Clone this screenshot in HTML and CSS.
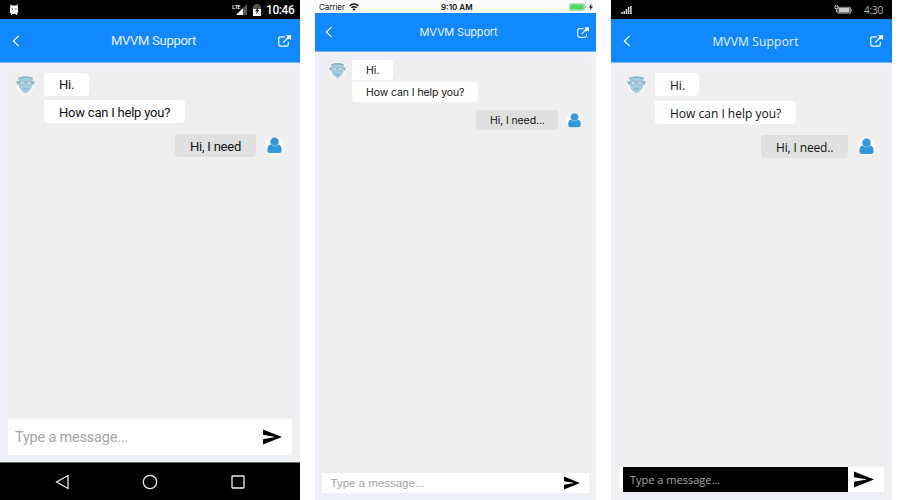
FILE: index.html
```html
<!DOCTYPE html>
<html lang="en">
<head>
<meta charset="utf-8">
<title>MVVM Support</title>
<link rel="stylesheet" href="styles.css">
</head>
<body>
<svg class="defs" aria-hidden="true">
  <symbol id="back" viewBox="0 0 8 12"><path d="M6.7.8 1.3 6l5.4 5.2" fill="none" stroke="#fff" stroke-width="1.100"/></symbol>
  <symbol id="share" viewBox="0 0 13 12"><path d="M7 1.8H2.5Q.8 1.8.8 3.5v6Q.8 11.2 2.5 11.2h6.2q1.6 0 1.600-1.700V7M5.200 7.600l5-5" fill="none" stroke="#fff" stroke-width="1.200"/><path d="M8 .2h5v5l-1.700-1.700L10 4.800 8.300 3.100l1.300-1.300z" fill="#fff"/></symbol>
  <symbol id="bot" viewBox="0 0 20 20"><circle cx="10" cy="10" r="9.500" fill="#fbfbfb"/><path d="M.5 6.500H3V10H1zM17 6.500h2.500L19 10h-2z" fill="#7fa6c0"/><path d="M2.500 3q7.500-3.500 15 0l-.3 8q-.7 5-7.200 8.500Q3.500 16 2.800 11z" fill="#a3cddb"/><path d="M2.500 3q7.500-3.500 15 0l-.2 1.500q-7.300-2.500-14.600 0z" fill="#8bb5c4"/><path d="M2.500 7.500h15" stroke="#82a9bf" stroke-width=".8"/><circle cx="6.500" cy="8.300" r="2.100" fill="#d8e6ef" stroke="#7b9fb8" stroke-width=".6"/><circle cx="13.500" cy="8.300" r="2.100" fill="#d8e6ef" stroke="#7b9fb8" stroke-width=".6"/><path d="M6.100 8.300h.9M13.100 8.300h.9" stroke="#6e8ba5"/><path d="M7.500 14.300q2.500 1.600 5 0" fill="none" stroke="#6f9bb0" stroke-width=".8"/></symbol>
  <symbol id="user" viewBox="0 0 20 20"><circle cx="10" cy="10" r="9.800" fill="#fbfbfb"/><path d="M6 9Q10 12.500 14 9q3.500.7 3.500 5.800 0 3-2.500 3H5q-2.500 0-2.500-3Q2.500 9.700 6 9z" fill="#3498db"/><circle cx="10" cy="6" r="4.500" fill="#3498db" stroke="#8fc4ea" stroke-width=".5"/></symbol>
  <symbol id="send" viewBox="0 0 20 16"><path d="M0 0 20 8 0 16V10.300L13 8 0 5.700z"/></symbol>
</svg>
<main class="screens">
  <section class="phone android">
    <div class="status">
      <svg class="critter" viewBox="0 0 10 11"><path d="M.8.5 3 2M9.200.5 7 2" stroke="#fff"/><path d="M1 3.500Q1 1.500 3 1.500h4q2 0 2 2V8q0 2-2 2H3Q1 10 1 8z" fill="#fff"/><path d="M2.500 10v1M7.500 10v1" stroke="#fff"/><path d="M2.500 5h1.500M6 5h1.500" stroke="#222" stroke-width=".8"/></svg>
      <span class="lte">LTE</span>
      <svg class="cell" viewBox="0 0 12 12"><path d="M12 0v12H0z" fill="#555"/><path d="M7.500 4.500V12H0z" fill="#fff"/></svg>
      <svg class="battery" viewBox="0 0 8 12"><path d="M0 1.500h2V0h4v1.500h2V5H0z" fill="#555"/><path d="M0 5h8v7H0z" fill="#fff"/><path d="M5.500 3 2 7.300h2L2.800 10.500 6.300 6.300H4.500z" fill="#000"/></svg>
      <time>10:46</time>
    </div>
    <header><svg class="back"><use href="#back"/></svg><h1>MVVM Support</h1><svg class="share"><use href="#share"/></svg></header>
    <div class="body">
      <div class="chat">
        <div class="row bot"><svg class="avatar"><use href="#bot"/></svg><div class="stack"><p class="bubble hi">Hi.</p><p class="bubble help">How can I help you?</p></div></div>
        <div class="row me"><p class="bubble need">Hi, I need</p><svg class="avatar"><use href="#user"/></svg></div>
      </div>
      <div class="composer"><span class="field">Type a message...</span><svg class="send"><use href="#send"/></svg></div>
    </div>
    <nav>
      <svg viewBox="0 0 16 16"><path d="M14 1.500v13L2.500 8z"/></svg>
      <svg viewBox="0 0 16 16"><circle cx="8" cy="8" r="6.700"/></svg>
      <svg viewBox="0 0 16 16"><rect x="2" y="2" width="12" height="12" rx=".5"/></svg>
    </nav>
  </section>

  <section class="phone ios">
    <div class="status">
      <span class="carrier">Carrier</span>
      <svg class="wifi" viewBox="0 0 10 8"><path d="M.6 2.900q4.400-3.800 8.800 0M2.400 4.800q2.600-2.200 5.200 0" fill="none" stroke="#111" stroke-width="1.400"/><path d="m3.500 6 1.500 1.700L6.500 6Q5 5 3.500 6z"/></svg>
      <time>9:10 AM</time>
      <svg class="battery" viewBox="0 0 24 8"><rect x=".4" y=".5" width="15.200" height="7" rx="1.200" fill="#fff" stroke="#9cc9a4" stroke-width=".7"/><rect x="1.200" y="1.200" width="13.600" height="5.600" rx=".6" fill="#4cd964"/><path d="M16.700 3v2" stroke="#999"/><path d="M22.500.5 20 4.500h1.700L20.900 7.500 24 3.600h-2z" fill="#111"/></svg>
    </div>
    <header><svg class="back"><use href="#back"/></svg><h1>MVVM Support</h1><svg class="share"><use href="#share"/></svg></header>
    <div class="body">
      <div class="chat">
        <div class="row bot"><svg class="avatar"><use href="#bot"/></svg><div class="stack"><p class="bubble hi">Hi.</p><p class="bubble help">How can I help you?</p></div></div>
        <div class="row me"><p class="bubble need">Hi, I need...</p><svg class="avatar"><use href="#user"/></svg></div>
      </div>
      <div class="composer"><span class="field">Type a message...</span><svg class="send"><use href="#send"/></svg></div>
    </div>
  </section>

  <section class="phone windows">
    <div class="status">
      <svg class="bars" viewBox="0 0 11 9"><path d="M1 9V7M3.200 9V6M5.400 9V4M7.600 9V2M9.900 9V1" stroke="#ddd" stroke-width="1.500"/></svg>
      <svg class="battery" viewBox="0 0 18 9"><path d="M4 2.300h12.500v5.900H4zM17.300 3.800v2.800" fill="none" stroke="#aaa" stroke-width=".9"/><path d="M5 3h10.500v4.500H5z" fill="#ccc"/><path d="M1 1h3v2.500H1zM2.500 3.500V7H4M1.500 0v1M3.500 0v1" fill="none" stroke="#bbb" stroke-width=".9"/></svg>
      <time>4:30</time>
    </div>
    <header><svg class="back"><use href="#back"/></svg><h1>MVVM Support</h1><svg class="share"><use href="#share"/></svg></header>
    <div class="body">
      <div class="chat">
        <div class="row bot"><svg class="avatar"><use href="#bot"/></svg><div class="stack"><p class="bubble hi">Hi.</p><p class="bubble help">How can I help you?</p></div></div>
        <div class="row me"><p class="bubble need">Hi, I need..</p><svg class="avatar"><use href="#user"/></svg></div>
      </div>
      <div class="composer"><span class="field">Type a message...</span><svg class="send"><use href="#send"/></svg></div>
    </div>
  </section>
</main>
</body>
</html>
```

FILE: styles.css
```css
* { box-sizing: border-box; }
body { margin: 0; background: #fff; overflow: hidden; }
.defs { display: none; }
svg { display: block; flex: none; }
h1, p { margin: 0; font-weight: 400; white-space: nowrap; }

.screens { display: grid; grid-template-columns: 300px 281px 281px; column-gap: 15px; height: 500px; }
.phone { display: flex; flex-direction: column; height: 500px; background: #eff0f5; color: #111; }
.status { display: flex; align-items: center; height: 19px; flex: none; background: #000; color: #fff; white-space: nowrap; }
header { display: flex; align-items: center; justify-content: space-between; height: 44px; flex: none; background: #1188ff; border-bottom: 1px solid #72b7fa; color: #fff; }
h1 { color: #e6f2ff; }
.back { width: 8px; height: 12px; }
.share { width: 13px; height: 12px; }
.body { flex: 1; display: flex; flex-direction: column; padding: 7px 8px; }
.chat { flex: 1; background: #efefef; }
.row { display: flex; }
.me { justify-content: flex-end; align-items: center; }
.avatar { width: 19px; height: 19px; }
.stack { display: flex; flex-direction: column; }
.bubble { display: flex; align-items: center; height: 23px; padding-left: 15px; background: #fff; border-radius: 4px; }
.hi { border-radius: 0 4px 4px 0; }
.help { border-radius: 0 4px 4px 4px; }
.need { background: #e0e0e0; border-radius: 4px 0 4px 4px; }
.composer { display: flex; align-items: center; justify-content: space-between; flex: none; background: #fff; }
.field { white-space: nowrap; color: #a6a6a6; }

.android { font: 13px/16px Roboto, sans-serif; }
.android .status { padding: 0 6px 0 9px; }
.critter { width: 10px; height: 11px; margin-right: auto; }
.lte { font: 600 6px/6px "Open Sans", sans-serif; letter-spacing: -.7px; align-self: flex-start; margin: 4px -4px 0 0; }
.cell { width: 11px; height: 11px; margin-right: 6px; }
.android .battery { width: 8px; height: 12px; margin-right: 5px; }
.android time { font-size: 12px; font-weight: 500; letter-spacing: -.4px; width: 28px; }
.android header { padding: 0 9px 0 12px; }
.android h1 { font-size: 13px; line-height: 16px; letter-spacing: -.27px; margin-left: 9px; }
.android .chat { padding: 3px 8px 0; }
.android .bot .avatar { margin: 2px 9px 0 0; }
.android .stack { gap: 4px; }
.android .bubble { letter-spacing: -.22px; }
.android .hi { width: 45px; }
.android .help { width: 141px; padding-top: 2px; }
.android .me { margin-top: 11px; }
.android .need { width: 81px; margin-right: 9px; padding-top: 2px; }
.android .composer { height: 36px; padding: 0 10px 0 7px; }
.android .field { font-size: 14.500px; letter-spacing: -.2px; padding-top: 2px; }
.android .send { width: 19px; height: 16px; }
nav { height: 38px; flex: none; display: flex; justify-content: space-between; align-items: center; padding: 0 54px; border-top: 1px solid #687069; background: #000; }
nav svg { width: 16px; height: 16px; fill: none; stroke: #eee; stroke-width: 1.300; }

.ios { font: 10.500px/14px Inter, sans-serif; }
.ios .status { height: 13px; padding: 1px 3px 0 4px; color: #111; background: #fafafa; }
.carrier { width: 26px; font: 8px/10px Inter, sans-serif; letter-spacing: -.05px; }
.wifi { width: 10px; height: 8px; margin-left: 4px; }
.ios time { font: 600 8px/10px Inter, sans-serif; margin-left: 82px; width: 33px; }
.ios .battery { width: 24px; height: 8px; margin-left: auto; }
.ios header { height: 39px; padding: 0 7px 0 10px; }
.ios h1 { font-size: 11px; line-height: 14px; letter-spacing: -.17px; margin-left: 7px; }
.ios .share { width: 12px; height: 11px; }
.ios .body { padding: 7px 7px 7px 6.500px; }
.ios .chat { padding: 1px 6px 0 7px; }
.ios .avatar { width: 17px; height: 17px; }
.ios .bot .avatar { margin: 2px 6.500px 0 0; }
.ios .bubble { height: 20px; padding: 1px 0 0 14px; letter-spacing: -.1px; }
.ios .stack { gap: 2px; }
.ios .hi { width: 41px; }
.ios .help { width: 126px; }
.ios .me { margin-top: 8px; }
.ios .need { width: 82px; margin-right: 8px; }
.ios .composer { height: 20px; padding: 0 9px; }
.ios .field { font: 11.500px/14px "Liberation Sans", Arial, sans-serif; letter-spacing: 0; }
.ios .send { width: 16px; height: 14px; }

.windows { font: 12px/16px "Open Sans", sans-serif; }
.windows .status { padding: 0 9px 0 10px; }
.bars { width: 11px; height: 9px; margin-right: auto; }
.windows .battery { width: 18px; height: 9px; margin-right: 12px; }
.windows time { font: 10px/14px "Open Sans", sans-serif; color: #bbb; width: 19px; letter-spacing: -.2px; }
.windows header { padding: 0 9px 0 12px; }
.windows h1 { font-size: 12px; line-height: 16px; letter-spacing: .18px; margin: 2px 0 0 10px; }
.windows .body { padding-bottom: 8px; }
.windows .chat { padding: 3px 8px 0; }
.windows .bot .avatar { margin: 2px 9px 0 0; }
.windows .stack { gap: 5px; }
.windows .bubble { padding-top: 2px; }
.windows .hi { width: 44px; }
.windows .help { width: 141px; }
.windows .me { margin-top: 11px; }
.windows .need { width: 87px; margin-right: 9px; letter-spacing: -.15px; }
.windows .composer { height: 25px; padding: 0 10px 0 4px; }
.windows .field { width: 225px; height: 25px; padding-left: 7px; background: #000; font-size: 11px; line-height: 25px; }
.windows .send { width: 20px; height: 17px; }
```
